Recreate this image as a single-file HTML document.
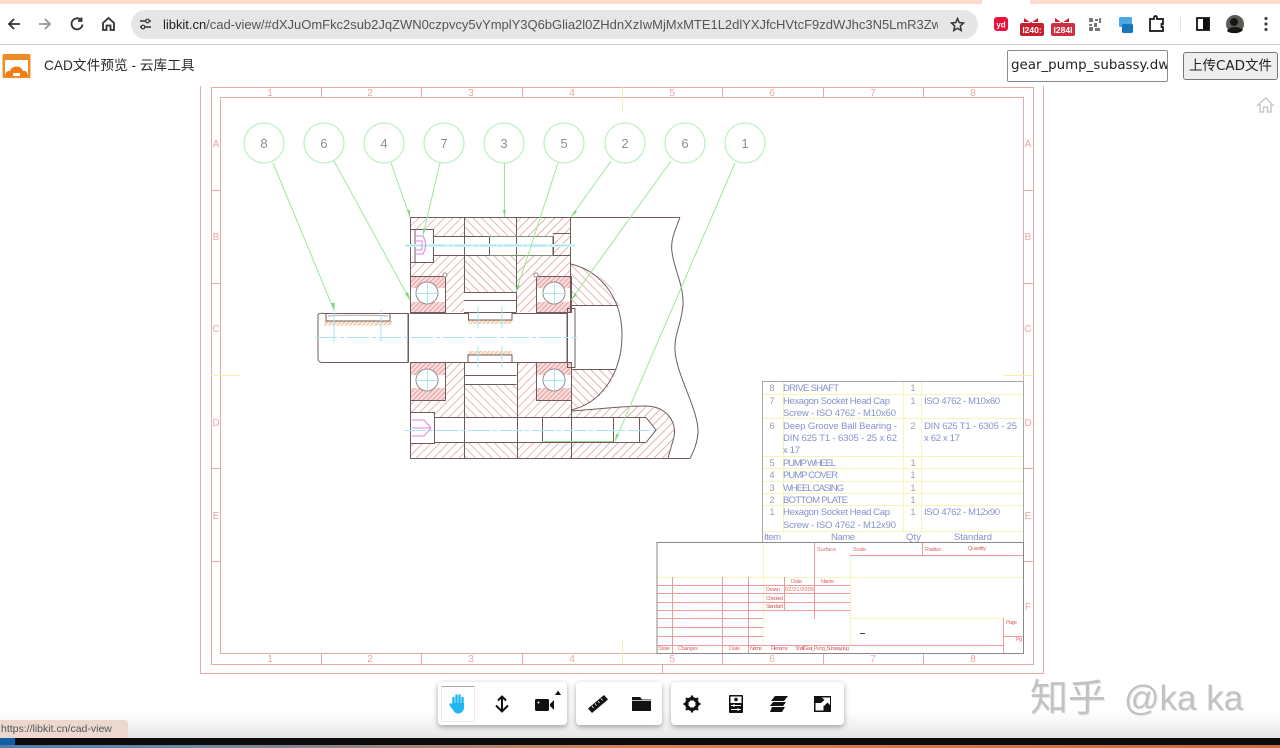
<!DOCTYPE html>
<html><head><meta charset="utf-8"><title>CAD文件预览 - 云库工具</title>
<style>
html,body{margin:0;padding:0;background:#fff;width:1280px;height:748px;overflow:hidden}
body{position:relative;font-family:"Liberation Sans","Noto Sans CJK SC",sans-serif}
.a{position:absolute}
svg{position:absolute;left:0;top:0}
.tb{background:#fff;border-radius:4px;box-shadow:0 2px 6px rgba(0,0,0,.35);top:682px;height:43px}
</style></head><body>

<!-- bottom fade and strips -->
<div class="a" style="left:0;top:712px;width:1280px;height:26px;background:linear-gradient(#fff,#e6e6e6)"></div>
<div class="a" style="left:0;top:738px;width:1280px;height:7px;background:#0c0a0a"></div>
<div class="a" style="left:0;top:738px;width:15px;height:7px;background:#0f5fa6"></div>
<div class="a" style="left:0;top:745px;width:1280px;height:3px;background:linear-gradient(90deg,#4f7fa6 0,#6d88a0 15%,#d98258 50%,#cf6a48 100%)"></div>

<!-- CAD drawing -->
<svg width="1280" height="748" viewBox="0 0 1280 748" style="filter:blur(.22px)" font-family="Liberation Sans,sans-serif">
<defs>
<pattern id="h1" width="6" height="6" patternUnits="userSpaceOnUse" patternTransform="rotate(45)"><line x1="0" y1="0" x2="0" y2="6" stroke="#e08e8e" stroke-width="1.300"/></pattern>
<pattern id="h2" width="6" height="6" patternUnits="userSpaceOnUse" patternTransform="rotate(-45)"><line x1="0" y1="0" x2="0" y2="6" stroke="#e08e8e" stroke-width="1.300"/></pattern>
<pattern id="h3" width="3.4" height="3.4" patternUnits="userSpaceOnUse" patternTransform="rotate(45)"><rect width="3.4" height="3.4" fill="#f8dcdc"/><line x1="0" y1="0" x2="0" y2="3.4" stroke="#e08080" stroke-width="1.300"/></pattern>
<pattern id="h4" width="3" height="3" patternUnits="userSpaceOnUse" patternTransform="rotate(45)"><rect width="3" height="3" fill="#fbeedd"/><line x1="0" y1="0" x2="0" y2="3" stroke="#e0a070" stroke-width="1.200"/></pattern>
<clipPath id="capT"><path d="M571 264C603 272 618 292 620 306H571Z"/></clipPath>
<clipPath id="capB"><path d="M571 369H617C610 392 592 406 571 410Z"/></clipPath>
<clipPath id="tongue"><path d="M571 411C600 409 625 406 645 406C665 406 677 420 674 437L668 458H571Z"/></clipPath>
</defs>

<!-- frames -->
<g fill="none" stroke="#e9a9a9" stroke-width="1">
<path d="M200.500 86V673.500H1043.500V86"/>
<path d="M211.500 87.500V664.500H1033.500V87.500Z"/>
<path d="M220.500 97.500H1023.500V653M220.500 97.500V653.500H657"/>
<path d="M321.500 87V97M421.500 87V97M522.500 87V97M622.500 87V97M722.500 87V97M823.500 87V97M923.500 87V97"/>
<path d="M321.500 654V664M421.500 654V664M522.500 654V664M622.500 654V664M722.500 654V664M823.500 654V664M923.500 654V664M662.500 664V673"/>
<path d="M211 190.500H220M211 283.500H220M211 375.500H220M211 468.500H220M211 561.500H220M1024 190.500H1033M1024 283.500H1033M1024 375.500H1033M1024 468.500H1033M1024 561.500H1033"/>
</g>
<g fill="none" stroke="#f6f0a8" stroke-width="1">
<path d="M622.500 87V112M622.500 640V664M211 375.500H240M1003 375.500H1033"/>
</g>
<g fill="#eba6a6" font-size="10" text-anchor="middle">
<text x="270" y="96">1</text><text x="370" y="96">2</text><text x="471" y="96">3</text><text x="572" y="96">4</text><text x="672" y="96">5</text><text x="772" y="96">6</text><text x="873" y="96">7</text><text x="973" y="96">8</text>
<text x="270" y="662">1</text><text x="370" y="662">2</text><text x="471" y="662">3</text><text x="572" y="662">4</text><text x="672" y="662">5</text><text x="772" y="662">6</text><text x="873" y="662">7</text><text x="973" y="662">8</text>
<text x="216" y="147">A</text><text x="216" y="240">B</text><text x="216" y="332">C</text><text x="216" y="426">D</text><text x="216" y="519">E</text>
<text x="1028" y="147">A</text><text x="1028" y="240">B</text><text x="1028" y="332">C</text><text x="1028" y="426">D</text><text x="1028" y="519">E</text><text x="1028" y="610">F</text>
</g>

<!-- hatching -->
<path d="M410 217H464V312H445V276H410Z" fill="url(#h1)"/>
<rect x="464" y="217" width="52.500" height="75" fill="url(#h2)"/>
<path d="M516.500 217H571V276H536V312H516.500Z" fill="url(#h1)"/>
<path d="M410 400H445V362H464V458H410Z" fill="url(#h1)"/>
<rect x="464" y="384" width="53" height="74" fill="url(#h2)"/>
<path d="M517 362H536V400H571V458H517Z" fill="url(#h1)"/>
<rect x="571" y="264" width="50" height="42" fill="url(#h2)" clip-path="url(#capT)"/>
<rect x="571" y="369" width="50" height="42" fill="url(#h2)" clip-path="url(#capB)"/>
<rect x="571" y="405" width="108" height="53" fill="url(#h1)" clip-path="url(#tongue)"/>

<!-- bolts: white holes -->
<g fill="#fff">
<rect x="410" y="229" width="23" height="33"/><rect x="433" y="236" width="120" height="19"/>
<rect x="410" y="412" width="24" height="31"/><rect x="434" y="417" width="212" height="25"/>
<path d="M646 417L656 430L646 442Z"/>
</g>
<!-- bearings -->
<g>
<rect x="410" y="276" width="35" height="12" fill="url(#h3)"/><rect x="410" y="302" width="35" height="10" fill="url(#h3)"/>
<rect x="536" y="276" width="35" height="12" fill="url(#h3)"/><rect x="536" y="302" width="35" height="10" fill="url(#h3)"/>
<rect x="410" y="363" width="35" height="12" fill="url(#h3)"/><rect x="410" y="388" width="35" height="12" fill="url(#h3)"/>
<rect x="536" y="363" width="35" height="12" fill="url(#h3)"/><rect x="536" y="388" width="35" height="12" fill="url(#h3)"/>
</g>
<!-- keys -->
<rect x="324" y="321" width="68" height="4.500" fill="url(#h4)"/>
<rect x="468" y="320" width="44" height="4" fill="url(#h4)"/>
<rect x="468" y="351" width="44" height="4" fill="url(#h4)"/>

<!-- outlines -->
<g fill="none" stroke="#6e5c5c" stroke-width="1">
<path d="M410.500 217.500H680M410.500 217.500V312M464.500 217.500V292M516.500 217.500V312M570.500 217.500V312"/>
<path d="M410.500 362V458.500H690M464.500 362V458.500M517.500 362V458.500M571.500 362V458.500"/>
<rect x="410.500" y="229.500" width="23" height="33"/><path d="M415 229.500V262"/>
<path d="M433 236.500H553V255.500H433M489.500 236.500V255.500M553.500 236.500V255.500M553 233.500H570.500M553 255.500H570.500"/>
<rect x="410.500" y="412.500" width="24" height="31"/>
<path d="M434 417.500H646L656 430L646 442.500H434M542.500 417.500V442.500M613.500 417.500V442.500M639.500 417.500V442.500"/>
<rect x="410.500" y="276.500" width="35" height="36"/><rect x="536.500" y="276.500" width="35" height="36"/>
<rect x="410.500" y="362.500" width="35" height="38"/><rect x="536.500" y="362.500" width="35" height="38"/>
<path d="M464 292.500H516.500M464 300.500H516.500M464 312.500H516.500M464 362.500H516.500M464 375.500H516.500M464 384.500H516.500"/>
<path d="M318 315C318 313 322 313 324 313.500H408V362.500H322C319 362.500 318 360 318 358Z"/>
<path d="M326 313.500V321H390V313.500"/>
<path d="M328 316C340 315 376 315 388 316" stroke="#aaa"/>
<path d="M408.500 313V362.500M410 313.500H468.500V320H512V313.500H567V362.500H410M468 362.500V355H512V362.500"/>
<path d="M567.500 308.500H575V367.500H567.500Z"/>
<path d="M571 264C603 272 622 300 622 335C622 372 602 403 571 410"/>
<path d="M571 305.500H618M571 369.500H615"/>
<path d="M571 411C600 409 625 406 645 406C665 406 677 420 674 437L668 458"/>
<path d="M680 217.500C676 228 670 240 672 252C674 270 684 285 683 305C682 322 674 335 675 350C676 375 699 410 698 433C697 445 693 452 690 458.500"/>
</g>
<g fill="#fff" stroke="#9a8a8a" stroke-width="1">
<circle cx="427" cy="293" r="11"/><circle cx="554" cy="293" r="11"/><circle cx="427" cy="380" r="11"/><circle cx="554" cy="380" r="11"/>
<circle cx="445" cy="275" r="2"/><circle cx="536" cy="275" r="2"/>
</g>
<!-- centre lines -->
<path d="M405 245.500H575" stroke="#d5f4f8" stroke-width="3" fill="none"/>
<g fill="none" stroke="#a5e6f2" stroke-width="1">
<path d="M405 245.500H575" stroke-dasharray="16 3 3 3"/>
<path d="M315 337.500H577" stroke-dasharray="22 3 4 3"/>
<path d="M404 430.500H655" stroke-dasharray="22 3 4 3"/>
<path d="M427.500 282V304M416 293.500H438M554.500 282V304M543 293.500H565M427.500 369V391M416 380.500H438M554.500 369V391M543 380.500H565"/>
<path d="M334 310V342M381 310V342M478 306V328M502 306V328M478 346V368M502 346V368"/>
</g>
<!-- screw head details -->
<g fill="none" stroke="#e080e0" stroke-width="1">
<path d="M415 236H423Q428 245 423 254H415M415 241H422V250H415"/>
<path d="M412 420H424L431 428L424 436H412M412 428H430"/>
</g>
<path d="M542 441.500H613" stroke="#8fdc8f" stroke-width="1"/>
<path d="M489 236.500H553M489 255.500H553" stroke="#8fbc8f" stroke-width=".6"/>

<!-- balloons -->
<g fill="none" stroke="#b5ecb8" stroke-width="1.100">
<circle cx="264" cy="143" r="20"/><circle cx="324" cy="143" r="20"/><circle cx="384" cy="143" r="20"/><circle cx="444" cy="143" r="20"/><circle cx="504" cy="143" r="20"/><circle cx="564" cy="143" r="20"/><circle cx="625" cy="143" r="20"/><circle cx="685" cy="143" r="20"/><circle cx="745" cy="143" r="20"/>
</g>
<g fill="#8f8f8f" font-size="13" text-anchor="middle">
<text x="264" y="148">8</text><text x="324" y="148">6</text><text x="384" y="148">4</text><text x="444" y="148">7</text><text x="504" y="148">3</text><text x="564" y="148">5</text><text x="625" y="148">2</text><text x="685" y="148">6</text><text x="745" y="148">1</text>
</g>
<g stroke="#9ce69c" stroke-width="1" fill="none">
<path d="M273 163L334 310M334 161L410 300M391 163L410 217M440 163L423 235M504.500 163V217M558 163L516 292M611 161L571 217M671 161L571 300M735 163L615 441"/>
</g>
<g fill="#7fd67f">
<path d="M334 310L331 303L335 303Z"/><path d="M410 300L405 294L408 292Z"/><path d="M410 217L407 210L410 210Z"/><path d="M423 235L423 228L426 229Z"/><path d="M504.500 217L503 210H506Z"/><path d="M516 292L517 285L520 286Z"/><path d="M571 217L575 210L577 212Z"/><path d="M571 300L575 293L577 295Z"/><path d="M615 441L616 434L619 435Z"/>
</g>

<!-- BOM table -->
<g fill="none" stroke="#f6f4b8" stroke-width="1">
<path d="M783.500 382V531M903.500 382V531M921.500 382V531M763 394.500H1023M763 418.500H1023M763 456.500H1023M763 468.500H1023M763 481.500H1023M763 493.500H1023M763 505.500H1023M763 531.500H1023"/>
</g>
<path d="M762.500 543V381.500H1023.500V543" fill="none" stroke="#a8a8a8" stroke-width="1"/>
<g fill="#8592cc" font-size="9.500">
<text x="783" y="391" textLength="56">DRIVE SHAFT</text>
<text x="783" y="404" textLength="107">Hexagon Socket Head Cap</text>
<text x="783" y="416" textLength="113">Screw - ISO 4762 - M10x60</text>
<text x="783" y="429" textLength="114">Deep Groove Ball Bearing -</text>
<text x="783" y="441" textLength="114">DIN 625 T1 - 6305 - 25 x 62</text>
<text x="783" y="453" textLength="17">x 17</text>
<text x="783" y="466" textLength="53">PUMP WHEEL</text>
<text x="783" y="478" textLength="55">PUMP COVER</text>
<text x="783" y="491" textLength="61">WHEEL CASING</text>
<text x="783" y="503" textLength="65">BOTTOM PLATE</text>
<text x="783" y="515" textLength="107">Hexagon Socket Head Cap</text>
<text x="783" y="528" textLength="113">Screw - ISO 4762 - M12x90</text>
<text x="924" y="404" textLength="76">ISO 4762 - M10x60</text>
<text x="924" y="429" textLength="93">DIN 625 T1 - 6305 - 25</text>
<text x="924" y="441" textLength="36">x 62 x 17</text>
<text x="924" y="515" textLength="76">ISO 4762 - M12x90</text>
<text x="831" y="540" textLength="24">Name</text>
<text x="906" y="540" textLength="15">Qty</text>
<text x="954" y="540" textLength="38">Standard</text>
<text x="764" y="540" textLength="17">Item</text>
</g>
<g fill="#a0a0a0" font-size="9.500" text-anchor="middle">
<text x="772" y="391">8</text><text x="772" y="404">7</text><text x="772" y="429">6</text><text x="772" y="466">5</text><text x="772" y="478">4</text><text x="772" y="491">3</text><text x="772" y="503">2</text><text x="772" y="515">1</text>
<text x="913" y="391">1</text><text x="913" y="404">1</text><text x="913" y="429">2</text><text x="913" y="466">1</text><text x="913" y="478">1</text><text x="913" y="491">1</text><text x="913" y="503">1</text><text x="913" y="515">1</text>
</g>

<!-- title block -->
<g fill="none" stroke="#f6f4b8" stroke-width="1">
<path d="M657 577.500H1023M763.500 544V645M850.500 556V645M850 618.500H1003"/>
</g>
<g fill="none" stroke="#ec9a9a" stroke-width="1">
<path d="M657 585.500H850M657 593.500H850M657 602.500H850M657 610.500H850M657 618.500H763M657 627.500H763M657 636.500H763M657 645.500H1003"/>
<path d="M672.500 577V653M722.500 577V653M748.500 577V653M784.500 577V610M814.500 543V619M922.500 543V555M1003.500 618V653M1003 636.500H1024M850 555.500H1024"/>
</g>
<path d="M657 653V542.500H1023.500V653.500H657Z" fill="none" stroke="#888" stroke-width="1"/>
<path d="M860 633.500H865" stroke="#444" stroke-width="1"/>
<g fill="#d86a6a" font-size="5.500">
<text x="817" y="551" textLength="19">Surface</text><text x="853" y="551" textLength="13">Scale</text><text x="925" y="551" textLength="16">Radius</text><text x="968" y="550" textLength="18">Quantity</text>
<text x="791" y="583" textLength="11">Date</text><text x="821" y="583" textLength="13">Name</text>
<text x="766" y="591" textLength="14">Drawn</text><text x="785" y="591" textLength="29">02/21/2005</text>
<text x="766" y="600" textLength="17">Checked</text><text x="766" y="608" textLength="17">Standard</text>
<text x="1006" y="624" textLength="11">Page</text><text x="1016" y="641" textLength="6">Pg</text>
<text x="658" y="650" textLength="12">State</text><text x="678" y="650" textLength="20">Changes</text><text x="729" y="650" textLength="11">Date</text><text x="750" y="650" textLength="12">Name</text><text x="771" y="650" textLength="17">Filename</text><text x="795" y="650" textLength="54">Shaft/Gear_Pump_Subassy.dwg</text>
</g>

<!-- home icon -->
<path d="M1257 106L1265.500 98L1274 106M1260 104V112H1263.500V107H1267.500V112H1271V104" fill="none" stroke="#c9c9c9" stroke-width="1.500"/>
</svg>

<!-- browser chrome -->
<div class="a" style="left:0;top:0;width:1280px;height:45px;background:#fff;border-bottom:1px solid #cfcfcf;box-sizing:border-box"></div>
<div class="a" style="left:0;top:0;width:982px;height:4px;background:#fddccc"></div>
<div class="a" style="left:1030px;top:0;width:250px;height:4px;background:#fddccc"></div>
<div class="a" style="left:131px;top:10px;width:847px;height:29px;border-radius:15px;background:#e6e6e6"></div>
<div class="a" style="left:163px;top:16px;width:775px;height:17px;line-height:17px;font-size:13px;letter-spacing:-.02px;color:#555;white-space:nowrap;overflow:hidden"><span style="color:#222">libkit.cn</span>/cad-view/#dXJuOmFkc2sub2JqZWN0czpvcy5vYmplY3Q6bGlia2l0ZHdnXzIwMjMxMTE1L2dlYXJfcHVtcF9zdWJhc3N5LmR3Zw</div>

<svg width="1280" height="46" viewBox="0 0 1280 46">
<g fill="none" stroke="#333" stroke-width="1.800">
<path d="M20 24H9M14 19L9 24L14 29"/>
<path d="M39 24H50M45 19L50 24L45 29" stroke="#999"/>
<path d="M81 20A5.500 5.500 0 1 0 82.500 24.500M81.500 17.500V21H78"/>
<path d="M103 23L108.500 18L114 23V30H110.500V25.500H106.500V30H103Z"/>
<path d="M140 21H146M149 21H151M140 27H142M145 27H151" stroke-width="1.500"/>
<path d="M957.500 18.500L959.200 22.500L963.500 23L960.300 26L961.200 30.500L957.500 28.200L953.800 30.500L954.700 26L951.500 23L955.800 22.500Z" stroke-width="1.500"/>
<path d="M1150 19H1154V17.500A1.500 1.500 0 0 1 1157 17.500V19H1163V24H1161.500V27H1163V31H1150Z" stroke="#111" stroke-width="1.700"/>
</g>
<circle cx="147.500" cy="21" r="1.800" fill="none" stroke="#333" stroke-width="1.200"/>
<circle cx="143" cy="27" r="1.800" fill="none" stroke="#333" stroke-width="1.200"/>
<rect x="994" y="17" width="14" height="14" rx="3" fill="#e8123a"/>
<text x="1001" y="27.500" font-size="8" font-weight="700" fill="#fff" text-anchor="middle" font-family="Liberation Sans">yd</text>
<path d="M1024 18L1031 23L1038 18V22H1024Z" fill="#c8202f"/>
<rect x="1020" y="23" width="24" height="13" rx="2" fill="#c8202f"/>
<text x="1032" y="33" font-size="8.500" font-weight="700" fill="#fff" text-anchor="middle" font-family="Liberation Sans">l240:</text>
<path d="M1055 18L1062 23L1069 18V22H1055Z" fill="#c8202f"/>
<rect x="1051" y="23" width="24" height="13" rx="2" fill="#cf3040"/>
<text x="1063" y="33" font-size="8.500" font-weight="700" fill="#fff" text-anchor="middle" font-family="Liberation Sans">l284l</text>
<g fill="#777"><rect x="1089" y="18" width="4" height="4"/><rect x="1095" y="19" width="3" height="2"/><rect x="1099" y="18" width="2" height="5"/><rect x="1089" y="24" width="3" height="2"/><rect x="1094" y="23" width="3" height="4"/><rect x="1089" y="27" width="4" height="4"/><rect x="1095" y="28" width="5" height="3"/></g>
<rect x="1119" y="17" width="13" height="10" rx="1.500" fill="#4ba8e4"/>
<rect x="1122" y="24" width="11" height="9" rx="1.500" fill="#1775b8"/>
<rect x="1197" y="18" width="12" height="12" fill="none" stroke="#111" stroke-width="1.800"/>
<rect x="1203" y="18" width="6" height="12" fill="#111"/>
<circle cx="1235" cy="24" r="9" fill="#5c5c54"/>
<circle cx="1234" cy="22" r="4" fill="#161616"/><path d="M1227 31C1229 26 1240 26 1243 30C1240 34 1230 34 1227 31Z" fill="#161616"/>
<g fill="#444"><circle cx="1266" cy="18.500" r="1.600"/><circle cx="1266" cy="24" r="1.600"/><circle cx="1266" cy="29.500" r="1.600"/></g>
<line x1="1180.500" y1="17" x2="1180.500" y2="31" stroke="#e8e0dc"/>
</svg>

<!-- header row -->
<div class="a" style="left:0;top:45px;width:1280px;height:41px;background:#fff"></div>
<svg width="32" height="30" viewBox="0 0 32 30" style="left:1px;top:52px">
<rect x="1.500" y="2" width="28" height="24" rx="1.500" fill="#f08a24"/>
<rect x="4" y="8" width="23" height="16" fill="#fff"/>
<path d="M4 24C5 18 8 19 9 19C11 13 20 13 22 19C24 19 26 18 27 24H19V21H12V24Z" fill="#ef7d10"/>
</svg>
<div class="a" style="left:44px;top:57px;font-size:13.700px;line-height:18px;color:#2a2a2a;white-space:nowrap">CAD文件预览 - 云库工具</div>
<div class="a" style="left:1007px;top:50px;width:161px;height:32px;box-sizing:border-box;border:1px solid #8a8a8a;border-radius:2px;background:#fff;font-family:'DejaVu Sans','Noto Sans CJK SC',sans-serif;font-size:13.400px;line-height:30px;padding-left:3px;color:#222;white-space:nowrap;overflow:hidden">gear_pump_subassy.dwg</div>
<div class="a" style="left:1183px;top:52px;width:95px;height:28px;box-sizing:border-box;border:1px solid #777;border-radius:3px;background:#efefef;font-size:13.500px;line-height:26px;text-align:center;color:#222;white-space:nowrap;font-family:'DejaVu Sans','Noto Sans CJK SC',sans-serif">上传CAD文件</div>

<!-- toolbar -->
<div class="a tb" style="left:438px;width:129px"></div>
<div class="a tb" style="left:576px;width:86px"></div>
<div class="a tb" style="left:671px;width:173px"></div>
<div class="a" style="left:441px;top:686px;width:34px;height:36px;background:#fff;box-sizing:border-box;border-top:1px solid #aaa;border-left:1px solid #e8e8e8;border-right:1px solid #e8e8e8;border-bottom:1px solid #f0f0f0"></div>
<svg width="1280" height="748" viewBox="0 0 1280 748">
<!-- hand -->
<g stroke="#1fb6f2" stroke-linecap="round" fill="none" stroke-width="2.400">
<path d="M453.500 704V698M456.500 703V695.500M459.500 703V695.500M462.500 704V698M450.500 704.500L453 708"/>
</g>
<path d="M452 703H464V707C464 711 461.500 713.500 458 713.500C455 713.500 453.500 711.500 452 708Z" fill="#1fb6f2"/>
<!-- up/down arrow -->
<g fill="none" stroke="#111" stroke-width="2"><path d="M502 697V711M498 700.500L502 696.500L506 700.500M496 705.500L502 711.500L508 705.500"/></g>
<!-- camera -->
<rect x="535" y="699" width="14" height="12" rx="1.500" fill="#111"/><path d="M550 704L554 700V710L550 706Z" fill="#111"/><circle cx="538.500" cy="702.500" r="1" fill="#fff"/>
<path d="M555 695L558 690.500L561 695Z" fill="#111"/>
<!-- ruler -->
<path d="M588 708.500L604 695L608 699.500L592 713Z" fill="#111"/>
<path d="M592 706L593.500 708M595 703.500L596.500 705.500M598 701L599.500 703M601 698.500L602.500 700.500" stroke="#fff" stroke-width=".8"/>
<!-- folder -->
<path d="M632 697H640L642 699.500H651V711H632Z" fill="#111"/><path d="M632 700.500H651" stroke="#fff" stroke-width=".8"/>
<!-- gear -->
<circle cx="692" cy="704" r="5.500" fill="none" stroke="#111" stroke-width="3"/>
<path d="M692 695.500V712.500M683.500 704H700.500M686 698L698 710M698 698L686 710" stroke="#111" stroke-width="2.200"/>
<circle cx="692" cy="704" r="3.500" fill="#fff"/>
<!-- panel -->
<rect x="729" y="695" width="14" height="18" rx="1" fill="#111"/><rect x="730.500" y="696.500" width="11" height="6.500" fill="#fff"/><circle cx="736" cy="699.500" r="1.800" fill="#111"/>
<path d="M731 705.500H741M731 709.500H741" stroke="#fff" stroke-width="1"/>
<rect x="733" y="704.500" width="2" height="2" fill="#fff"/><rect x="737" y="708.500" width="2" height="2" fill="#fff"/>
<!-- layers -->
<path d="M775 696H788L784 701H771Z M773 702H786L783 706H770Z M772 707H785L782 712H770Z" fill="#111"/>
<!-- resize box -->
<rect x="814" y="696" width="17" height="16" fill="#111"/>
<rect x="815.500" y="703" width="8" height="7.500" fill="#fff"/>
<path d="M822 697.500H830V705L827.500 702.500L824 706L821 703L824.500 700Z" fill="#fff"/>
</svg>

<!-- status tooltip -->
<div class="a" style="left:0;top:720px;width:128px;height:18px;background:#ecd8cf;border-radius:0 4px 0 0;font-size:10.500px;line-height:18px;color:#555;white-space:nowrap;padding-left:1px;box-sizing:border-box">https://libkit.cn/cad-view</div>

<!-- watermark -->
<div class="a" style="left:1030px;top:677px;font-size:38px;line-height:44px;color:#c2c2c2;white-space:nowrap;text-shadow:1px 1px 0 #e8e8e8;font-family:'Liberation Sans','Noto Sans CJK SC',sans-serif">知乎</div>
<div class="a" style="left:1124px;top:677px;font-size:35px;line-height:44px;color:#c2c2c2;white-space:nowrap;text-shadow:1px 1px 0 #e8e8e8">@ka ka</div>

</body></html>
